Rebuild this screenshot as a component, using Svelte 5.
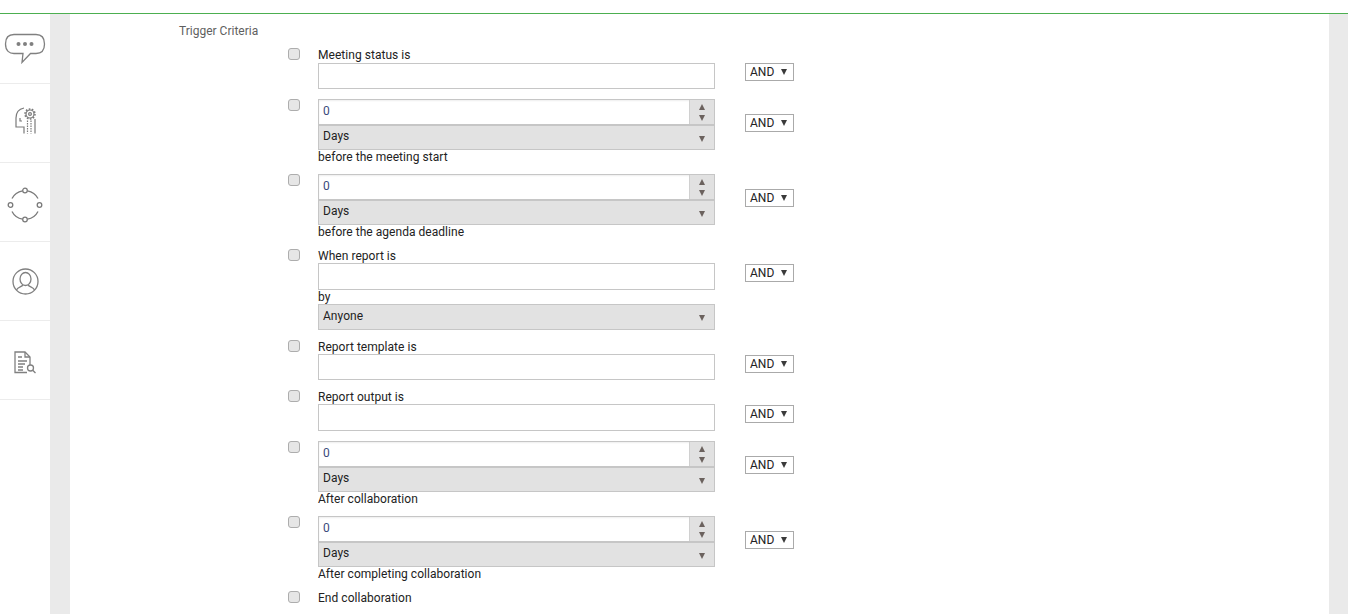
<script lang="ts">
  type Row = {
    kind: 'text' | 'days' | 'report' | 'plain';
    label: string;
    tight?: boolean;
    tall?: boolean;
  };

  const rows: Row[] = [
    { kind: 'text', label: 'Meeting status is' },
    { kind: 'days', label: 'before the meeting start' },
    { kind: 'days', label: 'before the agenda deadline' },
    { kind: 'report', label: 'When report is', tight: true, tall: true },
    { kind: 'text', label: 'Report template is', tight: true },
    { kind: 'text', label: 'Report output is', tight: true, tall: true },
    { kind: 'days', label: 'After collaboration' },
    { kind: 'days', label: 'After completing collaboration' },
    { kind: 'plain', label: 'End collaboration' }
  ];
</script>

<div class="page">
  <aside class="rail">
    <div class="rail-item first">
      <svg width="42" height="32" viewBox="0 0 42 32" fill="none" stroke="#808080" stroke-width="1.300">
        <path d="M10 1.500h22c4.500 0 8.500 2.500 8.500 9.500s-4 9.500-8.500 9.500h-5.500L18 29.500l1-9H10C5.500 20.500 1.500 18 1.500 11S5.500 1.500 10 1.500z" />
        <circle cx="14.500" cy="11" r="2" fill="#808080" stroke="none" />
        <circle cx="21" cy="11" r="2" fill="#808080" stroke="none" />
        <circle cx="27.500" cy="11" r="2" fill="#808080" stroke="none" />
      </svg>
    </div>
    <div class="rail-item head">
      <svg width="22" height="27" viewBox="0 0 22 27" fill="none" stroke="#7a7a7a" stroke-width="1.200">
        <path d="M10 26.500V20H2V11C2 6 5 2 10 1" />
        <circle cx="16" cy="7" r="4" />
        <circle cx="16" cy="7" r="5" stroke-dasharray="1.600 1.500" stroke-width="1.500" />
        <circle cx="16" cy="7" r="1.400" />
        <path d="M13.500 13.500v13M17 13.500v13" stroke-dasharray="1.500 1" />
        <path d="M21 12v14.500" />
        <path d="M6 11v3h2" />
      </svg>
    </div>
    <div class="rail-item ring">
      <svg width="36" height="36" viewBox="0 0 36 36" fill="none" stroke="#7a7a7a" stroke-width="1.300">
        <path d="M5 11.500A14.500 14.500 0 0 1 15.500 3.800M20.500 3.800A14.500 14.500 0 0 1 31 11.500M31 24.500A14.500 14.500 0 0 1 20.500 32.200M15.500 32.200A14.500 14.500 0 0 1 5 24.500" />
        <circle cx="18" cy="3.500" r="2.300" />
        <circle cx="32.500" cy="18" r="2.300" />
        <circle cx="18" cy="32.500" r="2.300" />
        <circle cx="3.500" cy="18" r="2.300" />
      </svg>
    </div>
    <div class="rail-item user">
      <svg width="27" height="27" viewBox="0 0 27 27" fill="none" stroke="#808080" stroke-width="1.300">
        <circle cx="13.500" cy="13.500" r="12.500" />
        <ellipse cx="13.500" cy="11" rx="5.500" ry="6.500" />
        <path d="M4.500 22c1-3 5-3 6.500-5M22.500 22c-1-3-5-3-6.500-5" />
      </svg>
    </div>
    <div class="rail-item doc">
      <svg width="22" height="23" viewBox="0 0 22 23" fill="none" stroke="#808080" stroke-width="1.300">
        <path d="M13 21.500H1V1h10l5 5v8" />
        <path d="M11 1v5h5" />
        <path d="M4 6h4M4 10h9M4 13h7M4 16h5M4 19h5" />
        <circle cx="16.500" cy="17" r="3" />
        <path d="M18.700 19.200l2.800 2.800" />
      </svg>
    </div>
  </aside>

  <div class="gutter"></div>

  <main class="main">
    <h2 class="title">Trigger Criteria</h2>
    <div class="criteria">
      {#each rows as row}
        <div class="row {row.kind}" class:tight={row.tight} class:tall={row.tall}>
          <span class="check"></span>
          <div class="field">
            {#if row.kind === 'days'}
              <div class="stepper">
                <span class="num">0</span>
                <span class="spin"><i class="up"></i><i class="down"></i></span>
              </div>
              <div class="select"><span>Days</span><i class="down"></i></div>
              <div class="label">{row.label}</div>
            {:else if row.kind === 'report'}
              <div class="label">{row.label}</div>
              <div class="input"></div>
              <div class="label by">by</div>
              <div class="select"><span>Anyone</span><i class="down"></i></div>
            {:else if row.kind === 'text'}
              <div class="label">{row.label}</div>
              <div class="input"></div>
            {:else}
              <div class="label">{row.label}</div>
            {/if}
          </div>
          {#if row.kind !== 'plain'}
            <div class="and"><span>AND</span><i></i></div>
          {/if}
        </div>
      {/each}
    </div>
  </main>

  <div class="gutter right"></div>
</div>

<style>
  :global(body) {
    margin: 0;
    background: #fff;
    font-family: Roboto, "Liberation Sans", sans-serif;
  }
  .page {
    display: flex;
    height: 614px;
    padding-top: 14px;
    box-sizing: border-box;
    overflow: hidden;
    position: relative;
  }
  .page::before {
    content: "";
    position: absolute;
    top: 13px;
    left: 0;
    right: 0;
    height: 1px;
    background: #4caf50;
  }
  .rail {
    width: 50px;
    flex: none;
  }
  .rail-item {
    height: 79px;
    box-sizing: border-box;
    border-bottom: 1px solid #ececec;
    display: flex;
    align-items: center;
    justify-content: center;
  }
  .rail-item.first {
    height: 70px;
  }
  .rail-item.head { padding-bottom: 5px; }
  .rail-item.ring { padding-top: 5px; }
  .rail-item.doc { padding-top: 5px; }
  .gutter {
    width: 20px;
    flex: none;
    background: #eaeaea;
  }
  .gutter.right { width: 19px; }
  .main {
    flex: 1;
    padding-left: 109px;
    font-size: 12px;
  }
  .title {
    margin: 9px 0 0;
    font-size: 12px;
    font-weight: 400;
    line-height: 16px;
    color: #5f5f5f;
  }
  .criteria {
    margin: 8px 0 0 109px;
  }
  .row {
    display: grid;
    grid-template-columns: 30px 397px 79px;
    align-items: start;
    padding-bottom: 9px;
  }
  .row.days { padding-top: 1px; padding-bottom: 8px; }
  .and { margin: 16px 0 0 30px; }
  .row.days .and { margin-top: 15px; }
  .check {
    box-sizing: border-box;
    width: 12px;
    height: 12px;
    margin-top: 1px;
    border: 1px solid #adadad;
    border-radius: 3px;
    background: #e6e6e6;
  }
  .row.days .check { margin-top: 0; }
  .label {
    height: 16px;
    line-height: 16px;
    letter-spacing: .04px;
    white-space: nowrap;
    color: #222;
  }
  .row.tight .label:first-child { height: 15px; }
  .row.days .label { margin-top: -1px; }
  .label.by { margin-top: -1px; height: 15px; }
  .input, .stepper, .select {
    box-sizing: border-box;
    border: 1px solid #c6c6c6;
  }
  .input {
    height: 26px;
    background: #fff;
  }
  .row.tall .input { height: 27px; }
  .stepper {
    height: 25px;
    display: flex;
    border-bottom: 0;
    box-shadow: inset 0 1px 2px #eee;
  }
  .num {
    flex: 1;
    padding-left: 4px;
    line-height: 22px;
    color: #3b4a7c;
  }
  .spin {
    width: 24px;
    background: #e1e1e1;
    border-left: 1px solid #d0d0d0;
    display: flex;
    flex-direction: column;
    align-items: center;
    justify-content: center;
    gap: 5px;
  }
  .select {
    height: 26px;
    padding: 0 9px 2px 4px;
    background: #e2e2e2;
    border-top: 2px solid #c6c6c6;
    display: flex;
    align-items: center;
    justify-content: space-between;
    color: #222;
    letter-spacing: .04px;
  }
  .row.days .select { padding-bottom: 3px; }
  .row.days .select i.down { margin-top: 5px; }
  .row.report .select { border-top-width: 1px; }
  i.up, i.down {
    width: 0;
    height: 0;
    border-left: 3.500px solid transparent;
    border-right: 3.500px solid transparent;
  }
  i.up { border-bottom: 6px solid #6b625e; }
  i.down { border-top: 6px solid #6b625e; }
  .select i.down { margin-top: 4px; }
  .and {
    box-sizing: border-box;
    width: 49px;
    height: 18px;
    border: 1px solid #aaa;
    padding: 0 6px 0 4px;
    display: flex;
    align-items: center;
    justify-content: space-between;
    color: #222;
    letter-spacing: .04px;
    background: #fff;
  }
  .and i {
    width: 0;
    height: 0;
    border-left: 3.500px solid transparent;
    border-right: 3.500px solid transparent;
    border-top: 6px solid #3a3a3a;
  }
</style>
